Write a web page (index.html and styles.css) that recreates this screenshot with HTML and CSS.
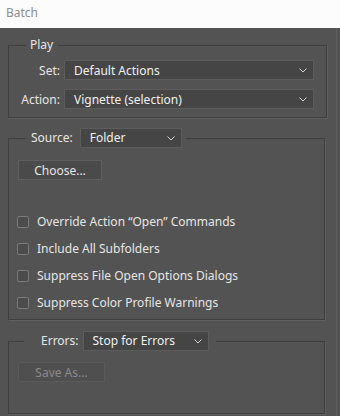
FILE: index.html
```html
<!DOCTYPE html>
<html lang="en">
<head>
  <meta charset="UTF-8" />
  <title>Batch</title>
  <link rel="stylesheet" href="styles.css">
</head>
<body>

  <div class="titlebar">Batch</div>

  <div class="dialog">
    <div class="column">

      <fieldset class="group play">
        <legend class="legend-play">Play</legend>
        <div class="formgrid">
          <label>Set:</label>
          <div class="select">
            <span>Default Actions</span>
            <svg class="chev" width="8" height="5" viewBox="0 0 8 5"><path d="M0.5 0.5 L4 4 L7.5 0.5" fill="none" stroke="#d0d0d0" stroke-width="1"/></svg>
          </div>
          <label>Action:</label>
          <div class="select">
            <span>Vignette (selection)</span>
            <svg class="chev" width="8" height="5" viewBox="0 0 8 5"><path d="M0.5 0.5 L4 4 L7.5 0.5" fill="none" stroke="#d0d0d0" stroke-width="1"/></svg>
          </div>
        </div>
      </fieldset>

      <fieldset class="group source">
        <legend class="legend-source">
          <label>Source:</label>
          <div class="select select-source">
            <span>Folder</span>
            <svg class="chev" width="8" height="5" viewBox="0 0 8 5"><path d="M0.5 0.5 L4 4 L7.5 0.5" fill="none" stroke="#d0d0d0" stroke-width="1"/></svg>
          </div>
        </legend>
        <button class="btn btn-choose">Choose...</button>
        <div class="checks">
          <div class="check"><span class="box"></span>Override Action “Open” Commands</div>
          <div class="check"><span class="box"></span>Include All Subfolders</div>
          <div class="check"><span class="box"></span>Suppress File Open Options Dialogs</div>
          <div class="check"><span class="box"></span>Suppress Color Profile Warnings</div>
        </div>
      </fieldset>

      <fieldset class="group errors">
        <legend class="legend-errors">
          <label>Errors:</label>
          <div class="select select-errors">
            <span>Stop for Errors</span>
            <svg class="chev" width="8" height="5" viewBox="0 0 8 5"><path d="M0.5 0.5 L4 4 L7.5 0.5" fill="none" stroke="#d0d0d0" stroke-width="1"/></svg>
          </div>
        </legend>
        <button class="btn btn-save" disabled>Save As...</button>
      </fieldset>

    </div>
  </div>

</body>
</html>
```

FILE: styles.css
```css
body {
  margin: 0;
  padding: 0;
  width: 340px;
  height: 416px;
  overflow: hidden;
  background-color: #535353;
  font-family: 'Noto Sans', 'Liberation Sans', sans-serif;
  font-size: 12px;
  color: #e6e6e6;
}

.titlebar {
  height: 28px;
  line-height: 26px;
  padding-left: 6px;
  background-color: #fcfcfc;
  color: #8e8e8e;
  font-size: 12px;
}

.dialog {
  display: flex;
  height: 388px;
}

.column {
  width: 337px;
  padding: 9px 0 0 8px;
  box-sizing: border-box;
  border-right: 1px solid #5e5e5e;
  height: 388px;
}

.group {
  margin: 0;
  border: 1px solid #3f3f3f;
  box-shadow: 1px 1px 0 #5f5f5f;
  padding: 0 12px 0 4px;
}

.group legend {
  line-height: 16px;
}

.legend-play {
  margin-left: 13px;
  padding: 0 4px;
}

.play {
  width: 319px;
  box-sizing: border-box;
  padding-top: 7px;
  padding-bottom: 8px;
}

.formgrid {
  display: grid;
  grid-template-columns: 47px 1fr;
  column-gap: 4px;
  row-gap: 9px;
  align-items: center;
}

.formgrid label {
  text-align: right;
}

.select {
  height: 20px;
  box-sizing: border-box;
  background-color: #454545;
  border: 1px solid #5c5c5c;
  display: flex;
  align-items: center;
  justify-content: space-between;
  padding: 0 6px 0 9px;
  color: #f0f0f0;
}

.chev {
  display: block;
}

.legend-source,
.legend-errors {
  display: flex;
  align-items: center;
}

.source {
  width: 317px;
  box-sizing: border-box;
  margin-top: 10px;
  padding-top: 12px;
  padding-bottom: 3px;
}

.legend-source {
  margin-left: 13px;
  padding: 0 4px 0 5px;
  gap: 7px;
}

.select-source {
  width: 102px;
}

.btn {
  display: block;
  height: 20px;
  box-sizing: border-box;
  font-family: inherit;
  font-size: 12px;
  background-color: #4a4a4a;
  border: 1px solid #5f5f5f;
  color: #e6e6e6;
  padding: 0;
  margin-left: 5px;
}

.btn-choose {
  width: 84px;
}

.checks {
  margin-top: 28px;
}

.check {
  height: 27px;
  display: flex;
  align-items: center;
  gap: 8px;
  padding-left: 4px;
}

.box {
  width: 12px;
  height: 12px;
  box-sizing: border-box;
  border: 1px solid #7a7a7a;
  border-radius: 2px;
  background-color: #4c4c4c;
}

.errors {
  width: 317px;
  height: 83px;
  box-sizing: border-box;
  margin-top: 11px;
  padding-top: 11px;
}

.legend-errors {
  margin-left: 11px;
  padding: 0 7px 0 17px;
  gap: 4px;
}

.select-errors {
  width: 126px;
}

.btn-save {
  width: 87px;
  color: #8a8a8a;
  background-color: #4f4f4f;
  border-color: #5a5a5a;
}
```
